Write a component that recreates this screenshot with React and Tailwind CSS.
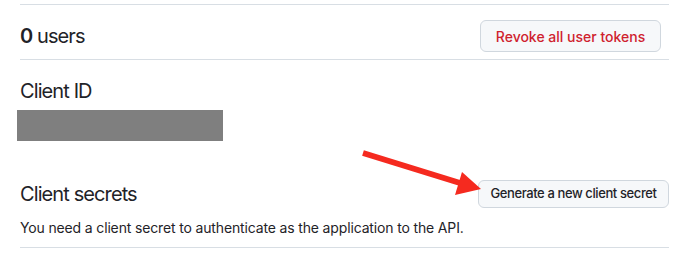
export default function App() {
  return (
    <div className="relative w-[681px] h-[259px] bg-white overflow-hidden text-[#1f2328] font-['Inter',sans-serif]">
      <div className="ml-[20px] w-[649px] mt-[4px]">
        <div className="border-t border-[#d8dee4] flex items-center justify-between pt-[15px] pb-[7px] pr-[8px]">
          <h2 className="text-[20px] leading-[30px] tracking-[-0.9px]">
            <span className="font-semibold">0</span> users
          </h2>
          <button className="h-[32px] w-[181px] rounded-[6px] border border-[#d0d7de] bg-[#f6f8fa] text-[14px] font-medium text-[#cf222e]">
            Revoke all user tokens
          </button>
        </div>
        <div className="border-t border-[#d8dee4] pt-[16px]">
          <h2 className="text-[20px] leading-[30px] tracking-[-0.9px]">Client ID</h2>
          <div className="mt-[4px] -ml-[3px] w-[206px] h-[31px] bg-[#7f7f7f]" />
          <div className="mt-[38px] flex items-center justify-between">
            <h2 className="text-[20px] leading-[30px] tracking-[-0.9px]">Client secrets</h2>
            <button className="h-[28px] w-[191px] rounded-[6px] border border-[#d0d7de] bg-[#f6f8fa] text-[13px] tracking-[-0.4px] font-medium text-[#1f2328]">
              Generate a new client secret
            </button>
          </div>
          <p className="mt-[8px] text-[14px] leading-[21px] tracking-[-0.15px]">
            You need a client secret to authenticate as the application to the API.
          </p>
          <div className="mt-[9px] border-t border-[#d8dee4]" />
        </div>
      </div>
      <svg className="absolute left-0 top-0 pointer-events-none" width="681" height="259" viewBox="0 0 681 259">
        <line x1="363" y1="153" x2="460" y2="183" stroke="#f52a1f" strokeWidth="6" strokeLinecap="butt" />
        <polygon points="462,172 455,195 481,189" fill="#f52a1f" />
      </svg>
    </div>
  );
}
